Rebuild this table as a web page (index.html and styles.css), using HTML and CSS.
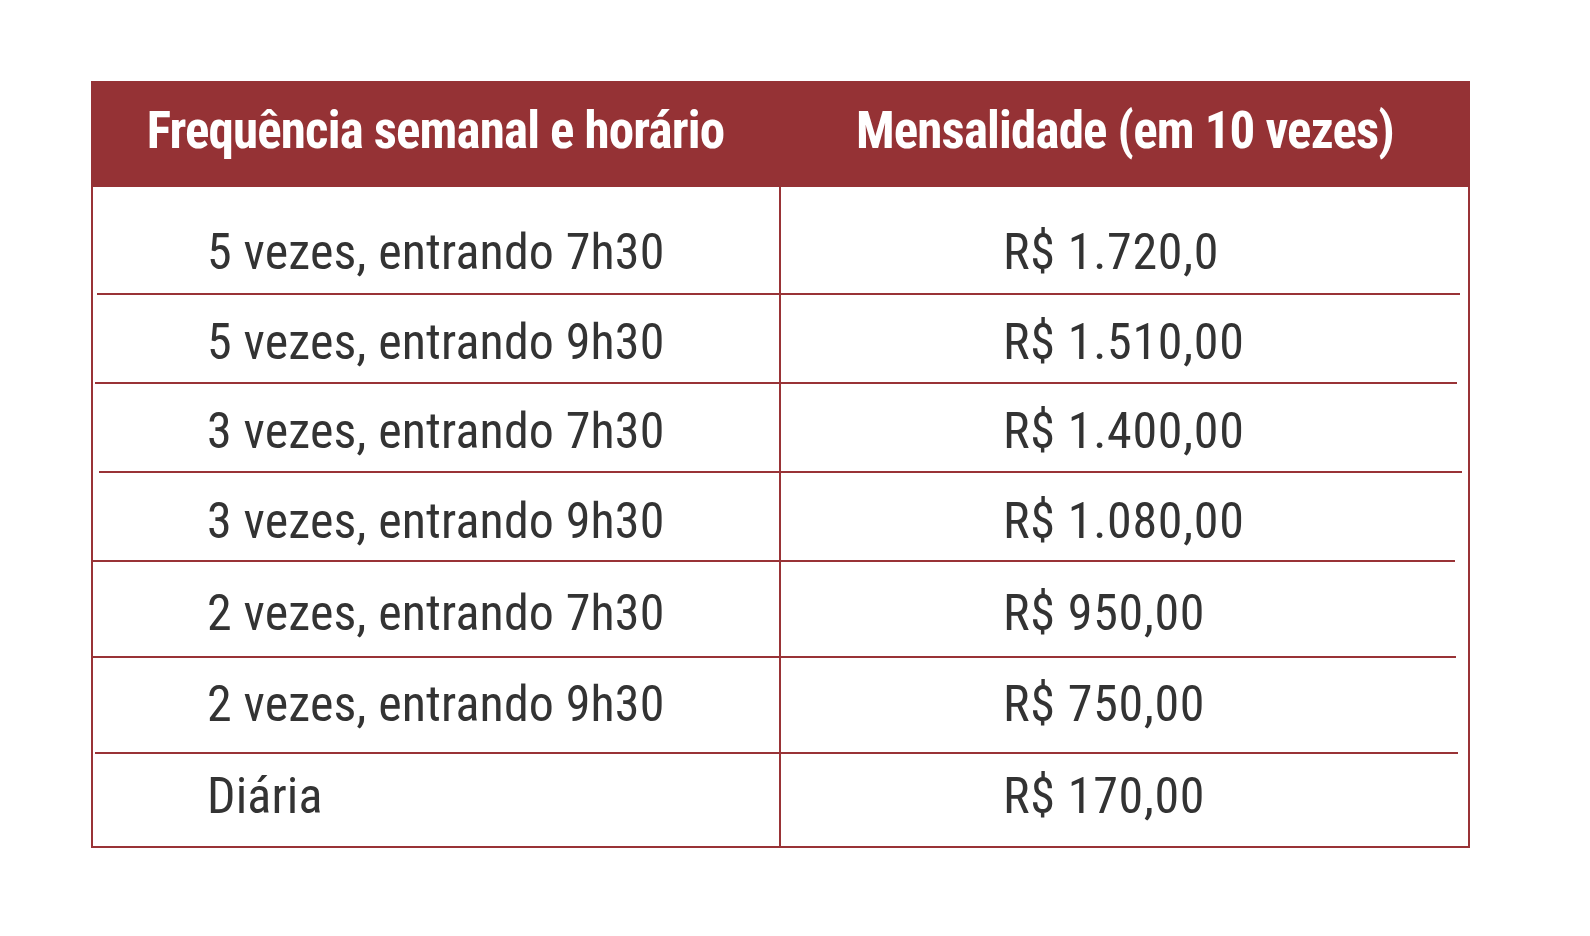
FILE: index.html
```html
<!DOCTYPE html>
<html lang="pt-BR">
<head>
<meta charset="utf-8">
<title>Mensalidades</title>
<link rel="stylesheet" href="styles.css">
</head>
<body>
<div class="price-table">
  <div class="head">
    <div class="hcell">Frequência semanal e horário</div>
    <div class="hcell">Mensalidade (em 10 vezes)</div>
  </div>
  <div class="body">
    <div class="row r1"><div class="cell c1">5 vezes, entrando 7h30</div><div class="cell c2">R$ 1.720,0</div></div>
    <div class="sep s1"></div>
    <div class="row r2"><div class="cell c1">5 vezes, entrando 9h30</div><div class="cell c2">R$ 1.510,00</div></div>
    <div class="sep s2"></div>
    <div class="row r3"><div class="cell c1">3 vezes, entrando 7h30</div><div class="cell c2">R$ 1.400,00</div></div>
    <div class="sep s3"></div>
    <div class="row r4"><div class="cell c1">3 vezes, entrando 9h30</div><div class="cell c2">R$ 1.080,00</div></div>
    <div class="sep s4"></div>
    <div class="row r5"><div class="cell c1">2 vezes, entrando 7h30</div><div class="cell c2">R$ 950,00</div></div>
    <div class="sep s5"></div>
    <div class="row r6"><div class="cell c1">2 vezes, entrando 9h30</div><div class="cell c2">R$ 750,00</div></div>
    <div class="sep s6"></div>
    <div class="row r7"><div class="cell c1">Diária</div><div class="cell c2">R$ 170,00</div></div>
  </div>
</div>
</body>
</html>
```
FILE: styles.css
```css
html, body {
  margin: 0;
  padding: 0;
  background: #ffffff;
}
body {
  font-family: "Roboto Condensed", Roboto, "Liberation Sans", sans-serif;
  font-stretch: 75%;
}
.price-table {
  margin: 81px 0 0 91px;
  width: 1379px;
}
.head {
  display: grid;
  grid-template-columns: 689px 1fr;
  height: 106px;
  background: #953235;
}
.hcell {
  color: #ffffff;
  font-weight: 700;
  font-size: 51px;
  line-height: 52px;
  letter-spacing: -0.85px;
  padding-top: 24px;
  text-align: center;
  white-space: nowrap;
}
.body {
  border: 2px solid #993336;
  border-top: 0;
}
.row {
  display: grid;
  grid-template-columns: 688px 1fr;
}
.cell {
  color: #333333;
  font-size: 50px;
  line-height: 50px;
  white-space: nowrap;
}
.c1 {
  border-right: 2px solid #993336;
  padding-left: 114px;
  letter-spacing: 0.15px;
}
.c2 {
  padding-left: 222px;
  letter-spacing: 0.7px;
}
.r1 { height: 106px; }
.r2, .r3, .r4 { height: 87px; }
.r5, .r6 { height: 94px; }
.r7 { height: 92px; }
.r1 .cell { padding-top: 40px; }
.r2 .cell, .r3 .cell { padding-top: 22px; }
.r4 .cell { padding-top: 23px; }
.r5 .cell { padding-top: 26px; }
.r6 .cell { padding-top: 21px; }
.r7 .cell { padding-top: 17px; }
.sep {
  height: 2px;
  background: #993336;
}
.s1 { margin: 0 8px 0 4px; }
.s2 { margin: 0 11px 0 2px; }
.s3 { margin: 0 6px 0 6px; }
.s4 { margin: 0 13px 0 0; }
.s5 { margin: 0 12px 0 0; }
.s6 { margin: 0 10px 0 2px; }
```
